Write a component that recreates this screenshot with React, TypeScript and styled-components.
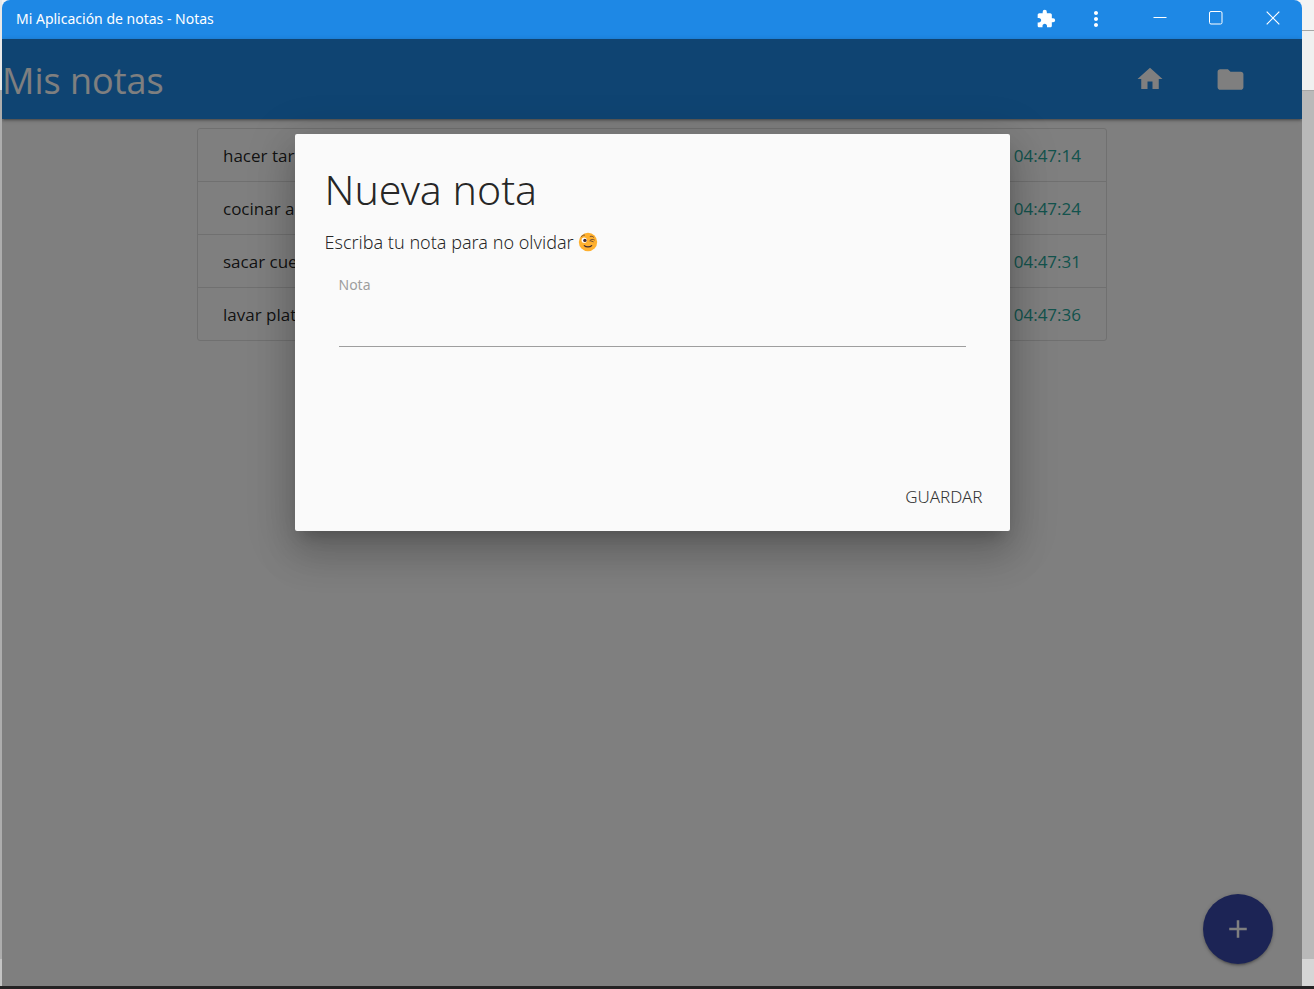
import React from "react";
import styled, { createGlobalStyle } from "styled-components";
import { MdAdd, MdExtension, MdFolder, MdHome, MdMoreVert } from "react-icons/md";

const GlobalStyle = createGlobalStyle`
  *, *::before, *::after { box-sizing: border-box; }
  body {
    margin: 0;
    font-family: "Segoe UI", "Open Sans", "Noto Sans", sans-serif;
    color: rgba(0, 0, 0, 0.87);
  }
  button, input { font: inherit; color: inherit; }
`;

const Desktop = styled.div`
  display: grid;
  grid-template-columns: 2px minmax(0, 1fr) 12px;
  grid-template-rows: minmax(0, 1fr) 3px;
  min-height: 100vh;
  background: #f3f3f3;
`;

const Edge = styled.div`
  display: flex;
  flex-direction: column;
`;

const EdgePart = styled.div<{ $height?: number; $color: string; $line?: boolean }>`
  flex: ${(p) => (p.$height ? `0 0 ${p.$height}px` : "1 1 auto")};
  background: ${(p) => p.$color};
  border-bottom: ${(p) => (p.$line ? "1px solid #a6a6a6" : "0")};
`;

const Taskbar = styled.div`
  grid-column: 1 / -1;
  background: #242223;
`;

const AppWindow = styled.div`
  display: flex;
  flex-direction: column;
  border-radius: 8px 8px 0 0;
  overflow: hidden;
  background: #fff;
`;

const TitleBar = styled.div`
  display: flex;
  align-items: flex-start;
  height: 39px;
  padding-left: 14px;
  background: #1e88e5;
  color: #fff;
  font-family: "Segoe UI", "Noto Sans", sans-serif;
`;

const WindowTitle = styled.span`
  flex: 1;
  font-size: 14px;
  line-height: 38px;
`;

const WindowButton = styled.button<{ $width: number; $height: number }>`
  display: grid;
  place-items: center;
  width: ${(p) => p.$width}px;
  height: ${(p) => p.$height}px;
  padding: 0;
  border: 0;
  background: none;
  color: #fff;
`;

const Client = styled.div`
  position: relative;
  flex: 1;
  display: flex;
  flex-direction: column;
`;

const NavBar = styled.header`
  display: flex;
  align-items: center;
  justify-content: space-between;
  height: 80px;
  padding-right: 32px;
  background: #1e88e5;
  color: #fff;
  box-shadow: 0 2px 2px 0 rgba(0, 0, 0, 0.14), 0 3px 1px -2px rgba(0, 0, 0, 0.12),
    0 1px 5px 0 rgba(0, 0, 0, 0.2);
`;

const Brand = styled.a`
  padding-top: 4px;
  color: inherit;
  font-size: 36px;
  line-height: 50px;
  text-decoration: none;
`;

const NavLinks = styled.nav`
  display: flex;
`;

const NavLink = styled.a`
  display: grid;
  place-items: center;
  width: 80px;
  height: 80px;
  color: inherit;
`;

const NoteList = styled.ul`
  width: 70%;
  margin: 9px auto;
  padding: 0;
  list-style: none;
  border: 1px solid #e0e0e0;
  border-radius: 3px;
`;

const NoteItem = styled.li`
  display: flex;
  justify-content: space-between;
  padding: 15px 25px 13px;
  font-size: 17px;
  line-height: 24px;

  & + & {
    border-top: 1px solid #e0e0e0;
  }
`;

const NoteTime = styled.time`
  color: #26a69a;
`;

const AddButton = styled.button`
  position: absolute;
  right: 29px;
  bottom: 22px;
  display: grid;
  place-items: center;
  width: 70px;
  height: 70px;
  padding: 0;
  border: 0;
  border-radius: 50%;
  background: #3949ab;
  color: #fff;
  box-shadow: 0 2px 2px 0 rgba(0, 0, 0, 0.14), 0 3px 1px -2px rgba(0, 0, 0, 0.12),
    0 1px 5px 0 rgba(0, 0, 0, 0.2);
`;

const Overlay = styled.div`
  position: absolute;
  inset: 0;
  display: grid;
  grid-template-rows: 10% 42%;
  justify-items: center;
  background: rgba(0, 0, 0, 0.5);
`;

const Dialog = styled.form`
  grid-row: 2;
  display: flex;
  flex-direction: column;
  width: 55%;
  border-radius: 2px;
  background: #fafafa;
  font-family: "Segoe UI", "Noto Sans", sans-serif;
  box-shadow: 0 24px 38px 3px rgba(0, 0, 0, 0.14), 0 9px 46px 8px rgba(0, 0, 0, 0.12),
    0 11px 15px -7px rgba(0, 0, 0, 0.2);
`;

const DialogBody = styled.div`
  flex: 1;
  padding: 30px;
`;

const DialogTitle = styled.h1`
  margin: 0 0 16px;
  font-size: 41px;
  font-weight: 300;
  line-height: 50px;
`;

const DialogText = styled.p`
  display: flex;
  align-items: center;
  gap: 4px;
  margin: 0;
  font-size: 18px;
  font-weight: 300;
  line-height: 25px;
`;

const Field = styled.div`
  display: flex;
  flex-direction: column;
  margin: 20px 14px 0;
`;

const FieldLabel = styled.label`
  color: #9e9e9e;
  font-size: 14px;
  line-height: 20px;
`;

const FieldInput = styled.input`
  width: 100%;
  height: 52px;
  padding: 0;
  border: 0;
  border-bottom: 1px solid #9e9e9e;
  border-radius: 0;
  background: transparent;
  outline: none;
  font-size: 18px;
`;

const DialogFooter = styled.footer`
  display: flex;
  align-items: center;
  justify-content: flex-end;
  height: 70px;
  padding-right: 7px;
`;

const SaveButton = styled.button`
  height: 46px;
  padding: 0 20px;
  border: 0;
  background: none;
  color: #343434;
  font-size: 17px;
  font-weight: 300;
  text-transform: uppercase;
`;

const WinkFace = () => (
  <svg width="20" height="20" viewBox="0 0 20 20" role="img" aria-label="Guiño">
    <circle cx="10" cy="10" r="9.2" fill="#ffb02e" />
    <circle cx="6.2" cy="8.2" r="2.6" fill="#fff" />
    <circle cx="6.9" cy="8.4" r="1.7" fill="#402a32" />
    <path d="M3.4 4.8C4 3.6 5.2 3 6.5 3.1" fill="none" stroke="#6b4a32" strokeWidth="0.9" strokeLinecap="round" />
    <path d="M12.2 4.4C13.5 3.9 14.9 4.3 15.7 5.3" fill="none" stroke="#6b4a32" strokeWidth="0.9" strokeLinecap="round" />
    <path d="M11.8 8.6C13 7.2 15 7 16.4 7.9M12.4 8.8L15.2 9.7" fill="none" stroke="#6b4a32" strokeWidth="0.9" strokeLinecap="round" strokeLinejoin="round" />
    <path d="M6.3 13.6C8 15.4 12 15.4 13.7 13.6" fill="none" stroke="#402a32" strokeWidth="1.2" strokeLinecap="round" />
  </svg>
);

const MinimizeIcon = () => (
  <svg width="14" height="14" viewBox="0 0 14 14" fill="none" stroke="currentColor">
    <path d="M0.5 6.5H13.5" />
  </svg>
);

const MaximizeIcon = () => (
  <svg width="14" height="14" viewBox="0 0 14 14" fill="none" stroke="currentColor">
    <rect x="0.5" y="0.5" width="12.5" height="12.5" rx="1.5" />
  </svg>
);

const CloseIcon = () => (
  <svg width="14" height="14" viewBox="0 0 14 14" fill="none" stroke="currentColor" strokeWidth="1.2">
    <path d="M0.7 0.7L13.3 13.3M13.3 0.7L0.7 13.3" />
  </svg>
);

const notes = [
  { text: "hacer tarea", time: "04:47:14" },
  { text: "cocinar arroz", time: "04:47:24" },
  { text: "sacar cuentas", time: "04:47:31" },
  { text: "lavar platos", time: "04:47:36" },
];

export default function App() {
  return (
    <>
      <GlobalStyle />
      <Desktop>
        <Edge>
          <EdgePart $height={90} $color="#e9e9e9" />
          <EdgePart $color="#adadad" />
          <EdgePart $height={27} $color="#c4c4c4" />
        </Edge>
        <AppWindow>
          <TitleBar>
            <WindowTitle>Mi Aplicación de notas - Notas</WindowTitle>
            <WindowButton $width={28} $height={38} aria-label="Extensiones">
              <MdExtension size={20} />
            </WindowButton>
            <WindowButton $width={72} $height={38} aria-label="Más opciones">
              <MdMoreVert size={24} />
            </WindowButton>
            <WindowButton $width={56} $height={36} aria-label="Minimizar">
              <MinimizeIcon />
            </WindowButton>
            <WindowButton $width={56} $height={36} aria-label="Maximizar">
              <MaximizeIcon />
            </WindowButton>
            <WindowButton $width={58} $height={36} aria-label="Cerrar">
              <CloseIcon />
            </WindowButton>
          </TitleBar>
          <Client>
            <NavBar>
              <Brand href="#">Mis notas</Brand>
              <NavLinks>
                <NavLink href="#inicio" aria-label="Inicio">
                  <MdHome size={30} />
                </NavLink>
                <NavLink href="#carpetas" aria-label="Carpetas">
                  <MdFolder size={31} />
                </NavLink>
              </NavLinks>
            </NavBar>
            <NoteList>
              {notes.map((note) => (
                <NoteItem key={note.time}>
                  <span>{note.text}</span>
                  <NoteTime>{note.time}</NoteTime>
                </NoteItem>
              ))}
            </NoteList>
            <AddButton aria-label="Agregar nota">
              <MdAdd size={30} />
            </AddButton>
            <Overlay>
              <Dialog role="dialog" aria-labelledby="dialog-title" onSubmit={(e) => e.preventDefault()}>
                <DialogBody>
                  <DialogTitle id="dialog-title">Nueva nota</DialogTitle>
                  <DialogText>
                    Escriba tu nota para no olvidar <WinkFace />
                  </DialogText>
                  <Field>
                    <FieldLabel htmlFor="note">Nota</FieldLabel>
                    <FieldInput id="note" type="text" />
                  </Field>
                </DialogBody>
                <DialogFooter>
                  <SaveButton type="submit">Guardar</SaveButton>
                </DialogFooter>
              </Dialog>
            </Overlay>
          </Client>
        </AppWindow>
        <Edge>
          <EdgePart $height={31} $color="#f3f3f3" $line />
          <EdgePart $height={60} $color="#f0f0f0" $line />
          <EdgePart $color="#b9b9b9" />
          <EdgePart $height={27} $color="#d6d6d6" />
        </Edge>
        <Taskbar />
      </Desktop>
    </>
  );
}
